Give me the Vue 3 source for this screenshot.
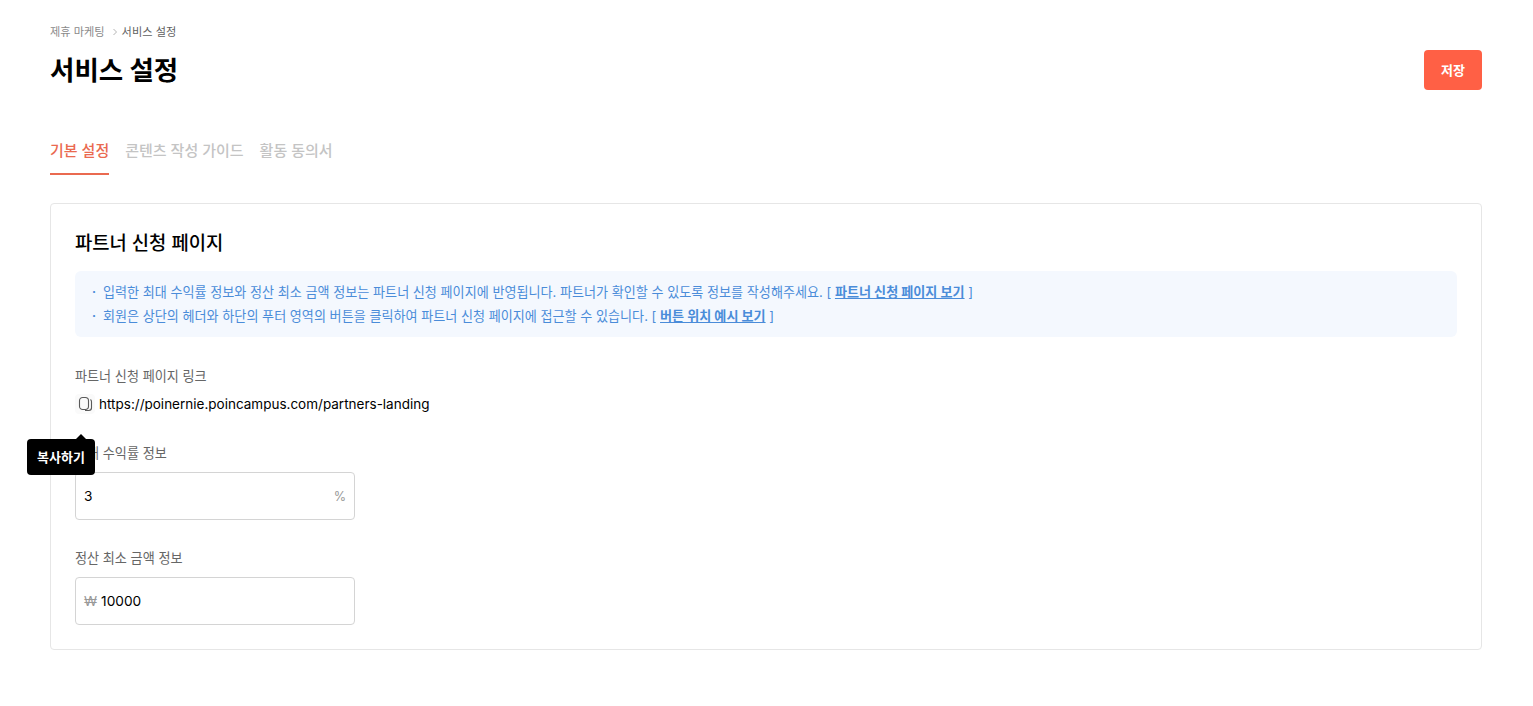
<script setup>
const notes = [
  { text: '입력한 최대 수익률 정보와 정산 최소 금액 정보는 파트너 신청 페이지에 반영됩니다. 파트너가 확인할 수 있도록 정보를 작성해주세요.', link: '파트너 신청 페이지 보기' },
  { text: '회원은 상단의 헤더와 하단의 푸터 영역의 버튼을 클릭하여 파트너 신청 페이지에 접근할 수 있습니다.', link: '버튼 위치 예시 보기' }
]
</script>

<template>
  <div class="page">
    <header class="head">
      <div>
        <nav class="crumb">
          <span class="c1">제휴 마케팅</span>
          <svg width="6" height="8" viewBox="0 0 6 8" class="sep"><path d="M1.5 1l3 3-3 3" fill="none" stroke="#b5b5b5" stroke-width="1"/></svg>
          <span class="c2">서비스 설정</span>
        </nav>
        <h1>서비스 설정</h1>
      </div>
      <button class="save">저장</button>
    </header>

    <div class="tabs">
      <span class="tab active">기본 설정</span>
      <span class="tab">콘텐츠 작성 가이드</span>
      <span class="tab">활동 동의서</span>
    </div>

    <section class="card">
      <h2>파트너 신청 페이지</h2>
      <div class="notice">
        <div v-for="n in notes" :key="n.link" class="note">
          <span class="dot">・</span><span>{{ n.text }} [ <b>{{ n.link }}</b> ]</span>
        </div>
      </div>

      <div class="label first">파트너 신청 페이지 링크</div>
      <div class="linkrow">
        <span class="copy">
          <svg width="18" height="18" viewBox="0 0 18 18" fill="none" stroke="#5a5a5a" stroke-width="1.1">
            <rect x="3.5" y="2.5" width="9" height="12" rx="3.2"/>
            <path d="M14.5 4.5c.6.5 1 1.2 1 2.2v6.1c0 1.6-1 2.7-2.7 2.7H9"/>
          </svg>
          <span class="tip">복사하기</span>
        </span>
        <span class="url">https://poinernie.poincampus.com/partners-landing</span>
      </div>

      <div class="label second">최대 수익률 정보</div>
      <div class="field">
        <span class="val">3</span>
        <span class="unit">%</span>
      </div>

      <div class="label third">정산 최소 금액 정보</div>
      <div class="field start">
        <span class="unit won">₩</span>
        <span class="val">10000</span>
      </div>
    </section>
  </div>
</template>

<style scoped>
.page {
  box-sizing: border-box;
  width: 1533px;
  height: 706px;
  padding: 24px 51px 0 50px;
  font-family: Inter, "Noto Sans CJK KR", sans-serif;
  color: #000;
  background: #fff;
  overflow: hidden;
}
.head { display: flex; justify-content: space-between; align-items: flex-start; }
.crumb { display: flex; align-items: center; height: 16px; font-size: 11.2px; line-height: 16px; }
.c1 { color: #8a8a8a; }
.c2 { color: #5f5f5f; }
.sep { margin: 0 4px 0 7px; }
h1 { margin: 7px 0 0; font-size: 26.5px; line-height: 46px; font-weight: 700; }
.save {
  margin-top: 26px;
  width: 58px;
  height: 40px;
  border: 0;
  border-radius: 4px;
  padding: 0 0 2px;
  background: #ff6045;
  color: #fff;
  font: 700 13px Inter, "Noto Sans CJK KR", sans-serif;
}
.tabs { display: flex; gap: 16px; margin-top: 32px; height: 50px; }
.tab { font-size: 15px; font-weight: 500; line-height: 22px; padding-top: 15px; color: #c4c4c4; box-sizing: border-box; }
.tab.active { color: #ea6a50; border-bottom: 2px solid #ea6a50; }
.card {
  box-sizing: border-box;
  margin-top: 28px;
  height: 447px;
  border: 1px solid #e6e6e6;
  border-radius: 4px;
  padding: 25px 24px 24px;
}
h2 { margin: 0; font-size: 18.8px; line-height: 30px; font-weight: 500; }
.notice {
  margin-top: 12px;
  padding: 9px 14px 9px;
  height: 66px;
  box-sizing: border-box;
  background: #f4f8fe;
  border-radius: 6px;
  color: #4a8cd9;
  font-size: 13.08px;
  line-height: 24px;
}
.note { display: flex; white-space: nowrap; }
.dot { width: 14px; flex: none; font-size: 10px; }
.note b { font-weight: 700; text-decoration: underline; }
.label { font-size: 13.12px; line-height: 20px; color: #666; }
.first { margin-top: 29px; }
.linkrow { display: flex; align-items: center; gap: 4px; margin-top: 6px; height: 24px; }
.copy {
  position: relative;
  width: 20px;
  height: 20px;
  display: flex;
  align-items: center;
  justify-content: center;
  border-radius: 4px;
  background: #fafafa;
}
.tip {
  position: absolute;
  left: -48px;
  top: 45px;
  width: 68px;
  height: 36px;
  background: #000;
  color: #fff;
  font-size: 13px;
  font-weight: 700;
  line-height: 36px;
  text-align: center;
  border-radius: 4px;
  z-index: 2;
}
.tip::before {
  content: "";
  position: absolute;
  left: 48px;
  top: -5px;
  width: 0;
  height: 0;
  border-left: 6px solid transparent;
  border-right: 6px solid transparent;
  border-bottom: 6px solid #000;
}
.url { font-size: 13.5px; line-height: 24px; }
.second { margin-top: 27px; }
.third { margin-top: 28px; }
.field {
  box-sizing: border-box;
  margin-top: 9px;
  width: 280px;
  height: 48px;
  border: 1px solid #d4d4d4;
  border-radius: 4px;
  padding: 0 8px;
  display: flex;
  align-items: center;
  justify-content: space-between;
  font-size: 13.7px;
}
.field.start { justify-content: flex-start; gap: 4px; }
.unit { color: #999; font-size: 12.6px; }
.won { font-size: 13.7px; }
</style>
